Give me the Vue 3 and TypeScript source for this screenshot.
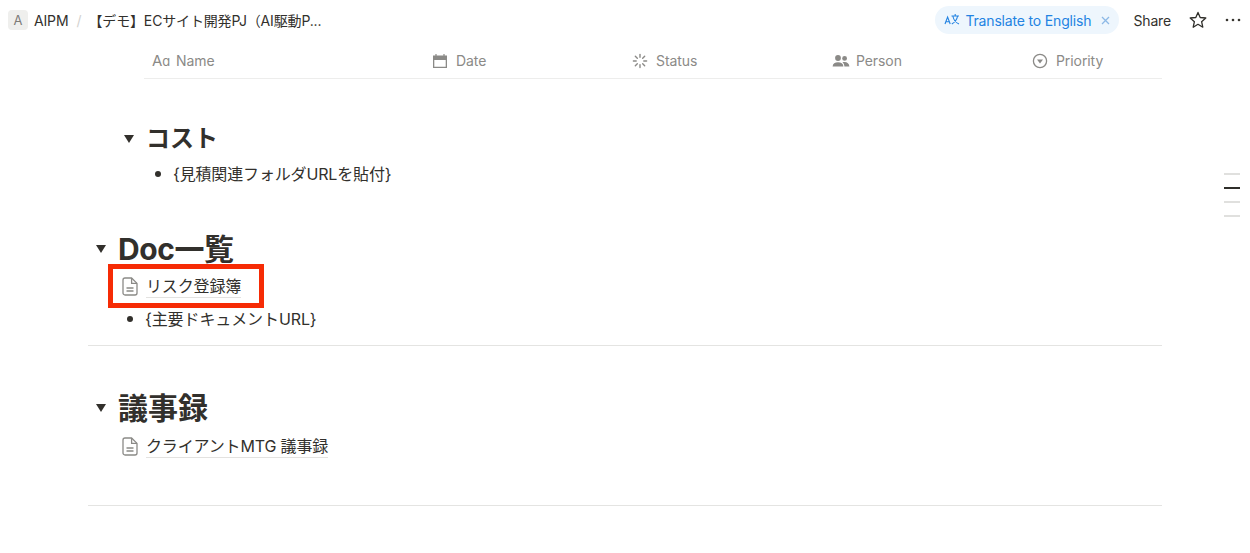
<script setup lang="ts">
const columns = [
  { name: 'Name', icon: 'name' },
  { name: 'Date', icon: 'date' },
  { name: 'Status', icon: 'status' },
  { name: 'Person', icon: 'person' },
  { name: 'Priority', icon: 'priority' },
];
const spokes = [0, 45, 90, 135, 180, 225, 270, 315];
</script>

<template>
  <div class="page">
    <header class="topbar">
      <div class="crumbs">
        <span class="workspace">A</span>
        <span class="crumb">AIPM</span>
        <span class="slash">/</span>
        <span class="crumb title">【デモ】ECサイト開発PJ（AI駆動P...</span>
      </div>
      <div class="actions">
        <div class="translate">
          <svg class="translate-icon" width="16" height="14" viewBox="0 0 16 14" fill="none" stroke="#2383e2" stroke-width="1.1">
            <path d="M1 11 3.6 4 6.2 11M1.9 8.8H5.3" />
            <path d="M7.5 3H15M11.2 1V3M13.6 3C13 6.5 10.5 9.5 7.8 11M8.8 3C9.6 6.5 12 9.8 15 11" />
          </svg>
          <span class="translate-label">Translate to English</span>
          <svg class="close" width="9" height="9" viewBox="0 0 9 9" stroke="#8db9e6" stroke-width="1.3">
            <path d="M1 1 8 8M8 1 1 8" />
          </svg>
        </div>
        <span class="share">Share</span>
        <svg class="star" width="18" height="18" viewBox="0 0 18 18" fill="none" stroke="#2f2e2a" stroke-width="1.3" stroke-linejoin="round">
          <path d="M9 1.4 11.2 6.5 16.8 7 12.6 10.7 13.8 16.2 9 13.3 4.2 16.2 5.4 10.7 1.2 7 6.8 6.5Z" />
        </svg>
        <svg class="more" width="16" height="4" viewBox="0 0 16 4" fill="#37352f">
          <circle cx="2" cy="2" r="1.3" />
          <circle cx="8" cy="2" r="1.3" />
          <circle cx="14" cy="2" r="1.3" />
        </svg>
      </div>
    </header>

    <main class="content">
      <div class="table-head">
        <div v-for="col in columns" :key="col.name" class="col" :class="'col-' + col.icon">
          <span v-if="col.icon === 'name'" class="aa">A<small>ɑ</small></span>
          <svg v-else-if="col.icon === 'date'" width="16" height="16" viewBox="0 0 16 16" fill="#8b8a87">
            <path d="M1 2.6h2.4V1h1.2v1.6h6.8V1h1.2v1.6H15V15H1Zm1.3 4.4v6.8h11.4V7Z" />
          </svg>
          <svg v-else-if="col.icon === 'status'" width="16" height="16" viewBox="0 0 16 16" stroke="#8b8a87" stroke-width="1.4" stroke-linecap="round">
            <path v-for="a in spokes" :key="a" d="M8 1.4V4.2" :transform="`rotate(${a} 8 8)`" />
          </svg>
          <svg v-else-if="col.icon === 'person'" width="18" height="16" viewBox="0 0 18 16" fill="#8b8a87">
            <circle cx="6" cy="5" r="2.9" />
            <circle cx="12.6" cy="5.4" r="2.4" />
            <path d="M0.6 13.4C.8 10.6 3 9.2 6 9.2s5.2 1.4 5.4 4.2ZM12.4 13.4C12.3 11.4 11.6 10 10.4 9.2 11 9 11.8 8.9 12.6 8.9 15.2 8.9 17.2 10.4 17.4 13.4Z" />
          </svg>
          <svg v-else width="16" height="16" viewBox="0 0 16 16" fill="none" stroke="#8b8a87" stroke-width="1.3">
            <circle cx="8" cy="8" r="6.6" />
            <path d="M5 6.4h6L8 10.4Z" fill="#8b8a87" stroke="none" />
          </svg>
          <span class="col-label">{{ col.name }}</span>
        </div>
      </div>

      <section class="nested">
        <div class="toggle h3">
          <i class="caret"></i>
          <h3>コスト</h3>
        </div>
        <div class="bullet cost-bullet">{見積関連フォルダURLを貼付}</div>
      </section>

      <section class="doc-section">
        <div class="toggle h1">
          <i class="caret"></i>
          <h1>Doc一覧</h1>
        </div>
        <div class="page-link marked">
          <svg width="16" height="19" viewBox="0 0 16 19" fill="none" stroke="#8b8a87" stroke-width="1.3" stroke-linejoin="round">
            <path d="M3 1H9.6L15 6.4V16a2 2 0 0 1-2 2H3a2 2 0 0 1-2-2V3a2 2 0 0 1 2-2Z" />
            <path d="M9.6 1V6.4H15M4.5 11H11.5M4.5 14H11.5" />
          </svg>
          <span class="link-text">リスク登録簿</span>
          <div class="mark"></div>
        </div>
        <div class="bullet doc-bullet">{主要ドキュメントURL}</div>
      </section>

      <hr class="divider first" />

      <section class="minutes-section">
        <div class="toggle h1">
          <i class="caret"></i>
          <h1 class="minutes-title">議事録</h1>
        </div>
        <div class="page-link">
          <svg width="16" height="19" viewBox="0 0 16 19" fill="none" stroke="#8b8a87" stroke-width="1.3" stroke-linejoin="round">
            <path d="M3 1H9.6L15 6.4V16a2 2 0 0 1-2 2H3a2 2 0 0 1-2-2V3a2 2 0 0 1 2-2Z" />
            <path d="M9.6 1V6.4H15M4.5 11H11.5M4.5 14H11.5" />
          </svg>
          <span class="link-text">クライアントMTG 議事録</span>
        </div>
      </section>

      <hr class="divider last" />
    </main>

    <div class="outline">
      <span></span>
      <span class="active"></span>
      <span></span>
      <span></span>
    </div>
  </div>
</template>

<style>
html,
body {
  margin: 0;
  background: #fff;
  overflow: hidden;
}
</style>

<style scoped>
.page {
  position: relative;
  width: 1250px;
  height: 553px;
  overflow: hidden;
  background: #fff;
  color: #32302c;
  font-family: Inter, "Noto Sans CJK JP", sans-serif;
}

.topbar {
  height: 44px;
  padding: 0 9px 4px 8px;
  box-sizing: border-box;
  display: flex;
  align-items: center;
  justify-content: space-between;
}

.crumbs,
.actions {
  display: flex;
  align-items: center;
}

.workspace {
  width: 20px;
  height: 20px;
  border-radius: 4px;
  background: #efefed;
  color: #7d7c78;
  font-size: 13px;
  display: flex;
  align-items: center;
  justify-content: center;
}

.crumb {
  font-size: 14px;
  letter-spacing: -0.15px;
  margin-left: 6px;
}

.slash {
  color: #d3d2cf;
  font-size: 14px;
  margin: 0 7px 0 8px;
}

.title {
  margin-left: 0;
}

.translate {
  height: 28px;
  width: 184px;
  box-sizing: border-box;
  padding-left: 9px;
  border-radius: 14px;
  background: #eef6fd;
  color: #2383e2;
  font-size: 14px;
  display: flex;
  align-items: center;
}

.translate-icon {
  margin-right: 5px;
}

.translate-label {
  letter-spacing: -0.17px;
}

.close {
  margin-left: 10px;
}

.share {
  font-size: 14px;
  letter-spacing: -0.15px;
  margin-left: 14px;
}

.star {
  margin-left: 18px;
}

.more {
  margin-left: 18px;
}

.content {
  margin-left: 88px;
  width: 1074px;
}

.table-head {
  margin-left: 56px;
  height: 35px;
  padding-bottom: 1px;
  box-sizing: border-box;
  border-bottom: 1px solid #ededec;
  display: flex;
  align-items: center;
  color: #8b8a87;
  font-size: 14px;
  overflow: hidden;
}

.col {
  flex: none;
  width: 200px;
  padding-left: 8px;
  box-sizing: border-box;
  display: flex;
  align-items: center;
  gap: 8px;
}

.col-name {
  width: 280px;
}

.col-label {
  letter-spacing: -0.08px;
}

.aa {
  width: 16px;
  font-size: 15px;
  line-height: 16px;
  white-space: nowrap;
}

.aa small {
  font-size: 13px;
}

.col-person {
  gap: 6px;
}

.nested {
  margin-left: 36px;
  margin-top: 42px;
}

.toggle {
  display: flex;
  align-items: center;
}

.caret {
  width: 0;
  height: 0;
  border-left: 5.5px solid transparent;
  border-right: 5.5px solid transparent;
  border-top: 8px solid #32302c;
}

h1,
h3 {
  margin: 0;
  font-weight: 700;
}

h3 {
  font-size: 24px;
  line-height: 36px;
  margin-left: 12px;
}

h1 {
  font-size: 30px;
  line-height: 38px;
  letter-spacing: -0.4px;
  margin-left: 12px;
}

.minutes-title {
  letter-spacing: 0;
}

.h1 {
  margin-left: 8px;
}

.bullet {
  position: relative;
  font-size: 16px;
  line-height: 24px;
}

.bullet::before {
  content: "";
  position: absolute;
  top: 9px;
  width: 6px;
  height: 6px;
  border-radius: 50%;
  background: #32302c;
}

.cost-bullet {
  margin-top: 5px;
  padding-left: 49px;
  letter-spacing: -0.15px;
}

.cost-bullet::before {
  left: 31px;
}

.doc-section {
  margin-top: 44px;
}

.page-link {
  position: relative;
  display: flex;
  align-items: center;
  margin-left: 34px;
  margin-top: 3px;
  height: 30px;
}

.link-text {
  font-size: 16px;
  line-height: 22px;
  letter-spacing: -0.15px;
  margin-left: 8px;
  border-bottom: 1px solid #e3e2e0;
}

.mark {
  position: absolute;
  left: -14px;
  top: -7px;
  width: 156px;
  height: 44px;
  box-sizing: border-box;
  border: 5px solid #f62b05;
}

.doc-bullet {
  margin-top: 6px;
  padding-left: 57px;
  letter-spacing: -0.1px;
}

.doc-bullet::before {
  left: 39px;
}

.divider {
  border: none;
  border-top: 1px solid #e4e4e2;
  margin: 0;
}

.first {
  margin-top: 14px;
}

.minutes-section {
  margin-top: 43px;
}

.minutes-section .page-link {
  margin-top: 4px;
}

.last {
  margin-top: 44px;
}

.outline {
  position: absolute;
  left: 1224px;
  top: 173px;
  width: 16px;
  display: flex;
  flex-direction: column;
  gap: 12px;
}

.outline span {
  height: 2px;
  background: #e0e0de;
}

.outline .active {
  background: #2f2e2a;
}
</style>
